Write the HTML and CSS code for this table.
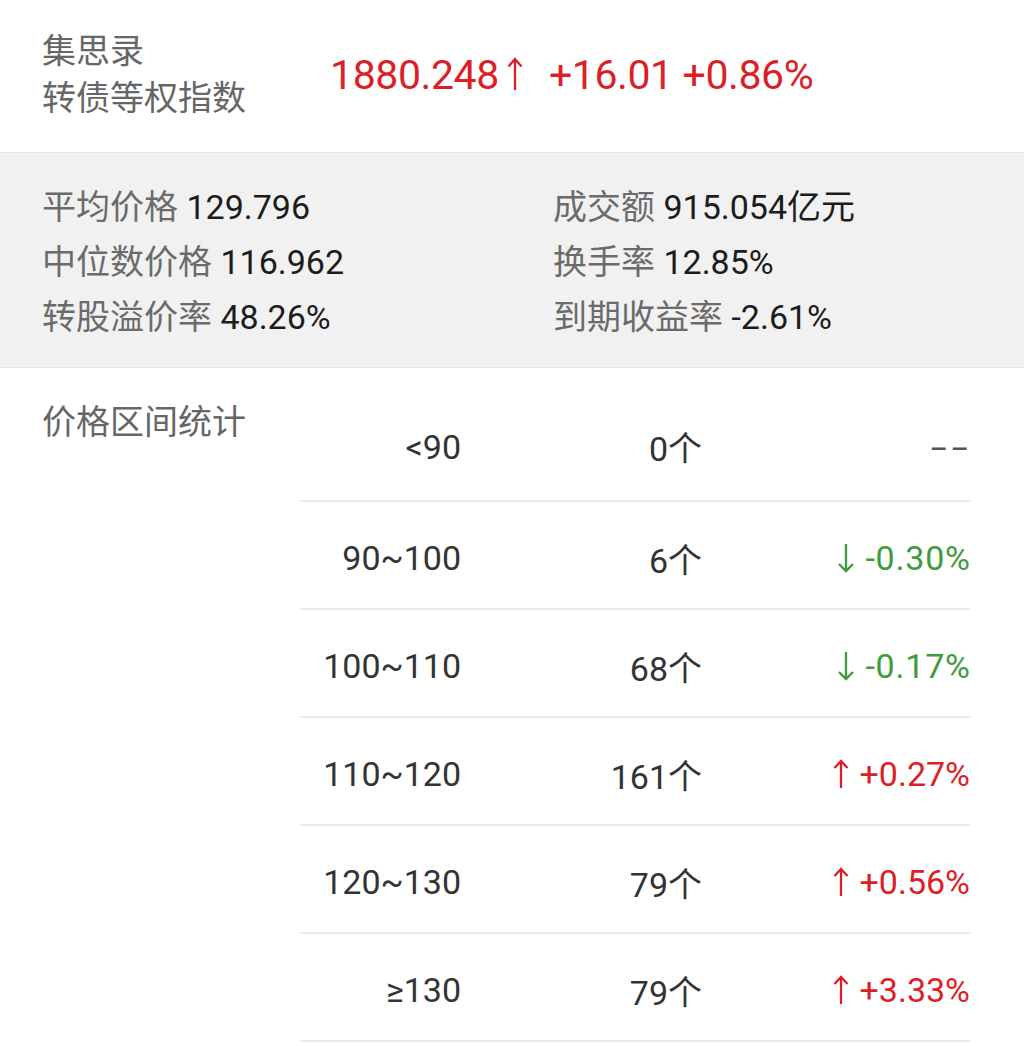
FILE: index.html
```html
<!DOCTYPE html>
<html lang="zh-CN">
<head>
<meta charset="utf-8">
<title>集思录 转债等权指数</title>
<link rel="stylesheet" href="styles.css">
</head>
<body>
<div class="page">
  <header class="header">
    <div class="title">
      <div>集思录</div>
      <div>转债等权指数</div>
    </div>
    <div class="index up">
      <span>1880.248</span>
      <svg class="arr arr-lg" viewBox="0 0 16 34" aria-hidden="true"><path d="M8 33 V2 M1.5 9.5 L8 2 L14.5 9.5"/></svg>
      <span>+16.01 +0.86%</span>
    </div>
  </header>

  <section class="stats">
    <div class="col">
      <div class="stat"><span class="lbl">平均价格</span> <span class="val">129.796</span></div>
      <div class="stat"><span class="lbl">中位数价格</span> <span class="val">116.962</span></div>
      <div class="stat"><span class="lbl">转股溢价率</span> <span class="val">48.26%</span></div>
    </div>
    <div class="col">
      <div class="stat"><span class="lbl">成交额</span> <span class="val">915.054亿元</span></div>
      <div class="stat"><span class="lbl">换手率</span> <span class="val">12.85%</span></div>
      <div class="stat"><span class="lbl">到期收益率</span> <span class="val">-2.61%</span></div>
    </div>
  </section>

  <section class="ranges">
    <div class="ranges-title">价格区间统计</div>
    <div class="table">
      <div class="row"><span class="c1">&lt;90</span><span class="c2">0个</span><span class="c3 none"><span class="dash">--</span></span></div>
      <div class="row"><span class="c1">90~100</span><span class="c2">6个</span><span class="c3 down"><svg class="arr arr-dn" viewBox="0 0 18 30" aria-hidden="true"><path d="M9 1 V28 M2 21 L9 28 L16 21"/></svg><span class="neg">-0.30%</span></span></div>
      <div class="row"><span class="c1">100~110</span><span class="c2">68个</span><span class="c3 down"><svg class="arr arr-dn" viewBox="0 0 18 30" aria-hidden="true"><path d="M9 1 V28 M2 21 L9 28 L16 21"/></svg><span class="neg">-0.17%</span></span></div>
      <div class="row"><span class="c1">110~120</span><span class="c2">161个</span><span class="c3 up"><svg class="arr arr-up" viewBox="0 0 16 30" aria-hidden="true"><path d="M8 29 V2 M1.5 9 L8 2 L14.5 9"/></svg><span>+0.27%</span></span></div>
      <div class="row"><span class="c1">120~130</span><span class="c2">79个</span><span class="c3 up"><svg class="arr arr-up" viewBox="0 0 16 30" aria-hidden="true"><path d="M8 29 V2 M1.5 9 L8 2 L14.5 9"/></svg><span>+0.56%</span></span></div>
      <div class="row"><span class="c1">≥130</span><span class="c2">79个</span><span class="c3 up"><svg class="arr arr-up" viewBox="0 0 16 30" aria-hidden="true"><path d="M8 29 V2 M1.5 9 L8 2 L14.5 9"/></svg><span>+3.33%</span></span></div>
    </div>
  </section>
</div>
</body>
</html>
```

FILE: styles.css
```css
* { box-sizing: border-box; }
html, body {
  margin: 0;
  padding: 0;
  background: #ffffff;
}
body {
  font-family: Roboto, "Noto Sans CJK SC", sans-serif;
  color: #222222;
}
.page {
  width: 1024px;
}

.header {
  display: flex;
  align-items: center;
  height: 152px;
  padding: 28px 0 30px 42px;
}
.title {
  width: 288px;
  font-size: 34px;
  line-height: 47px;
  color: #666666;
}
.index {
  display: flex;
  align-items: center;
  font-size: 41px;
  line-height: 47px;
  letter-spacing: -0.4px;
}
.up { color: #dc1f26; }
.down { color: #3e9b3e; }
.none { color: #555555; }

.arr {
  display: block;
  fill: none;
  stroke: currentColor;
  stroke-width: 2.3;
  stroke-linecap: butt;
  stroke-linejoin: miter;
}
.arr-lg {
  width: 16px;
  height: 34px;
  margin: -3px 26px 0 8px;
}
.arr-up {
  width: 16px;
  height: 30px;
  margin-right: 11px;
}
.arr-dn {
  width: 18px;
  height: 30px;
  margin-right: 10px;
}
.neg {
  letter-spacing: 0.8px;
  margin-right: -0.8px;
}

.stats {
  display: flex;
  background: #f1f1f1;
  border-top: 1px solid #e6e6e6;
  border-bottom: 1px solid #e6e6e6;
  padding: 27px 0 22px 42px;
}
.col {
  display: flex;
  flex-direction: column;
}
.col:first-child { width: 511px; }
.stat {
  font-size: 34px;
  line-height: 55px;
  white-space: nowrap;
}
.lbl { color: #6b6b6b; }
.val { color: #1c1c1c; }

.ranges {
  display: flex;
  padding: 27px 0 0 42px;
}
.ranges-title {
  width: 258px;
  font-size: 34px;
  line-height: 46px;
  color: #666666;
  padding-top: 4px;
}
.table {
  width: 670px;
}
.row {
  display: flex;
  align-items: center;
  height: 108px;
  padding-top: 6px;
  border-bottom: 2px solid #ebebeb;
  font-size: 34px;
  color: #333333;
}
.row:first-child { height: 107px; padding-top: 0; padding-bottom: 2px; }
.c1 { width: 161px; text-align: right; }
.c2 { width: 241px; text-align: right; }
.c3 {
  width: 268px;
  display: flex;
  justify-content: flex-end;
  align-items: center;
}
.dash {
  display: inline-block;
  letter-spacing: 3px;
  margin-right: -3px;
  transform: scaleX(1.7);
  transform-origin: right center;
}
```
